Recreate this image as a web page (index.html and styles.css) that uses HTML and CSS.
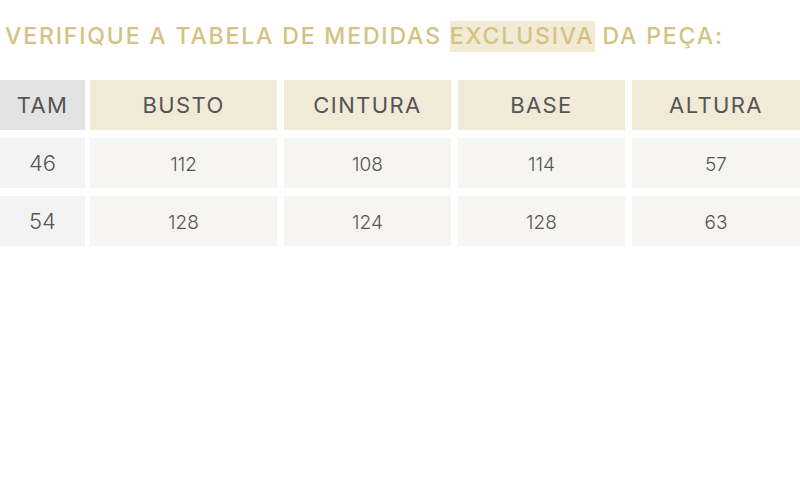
FILE: index.html
```html
<!DOCTYPE html>
<html lang="pt">
<head>
<meta charset="utf-8">
<link rel="stylesheet" href="styles.css">
</head>
<body>
<div class="page">
  <h2 class="title">VERIFIQUE A TABELA DE MEDIDAS <span class="mark">EXCLUSIVA</span> DA PEÇA:</h2>
  <div class="table">
    <div class="cell head tam">TAM</div>
    <div class="cell head">BUSTO</div>
    <div class="cell head">CINTURA</div>
    <div class="cell head">BASE</div>
    <div class="cell head">ALTURA</div>

    <div class="cell size">46</div>
    <div class="cell val">112</div>
    <div class="cell val">108</div>
    <div class="cell val">114</div>
    <div class="cell val">57</div>

    <div class="cell size">54</div>
    <div class="cell val">128</div>
    <div class="cell val">124</div>
    <div class="cell val">128</div>
    <div class="cell val">63</div>
  </div>
</div>
</body>
</html>
```

FILE: styles.css
```css
html, body {
  margin: 0;
  padding: 0;
  background: #ffffff;
}

.page {
  width: 800px;
  overflow: hidden;
  font-family: "Inter", "DejaVu Sans", sans-serif;
}

.title {
  margin: 21px 0 0 0;
  padding-left: 5px;
  font-size: 23px;
  font-weight: 500;
  line-height: 31px;
  color: #d4c283;
  letter-spacing: 1.85px;
  white-space: nowrap;
}

.mark {
  display: inline-block;
  background: #f1ebd5;
  line-height: 31px;
}

.table {
  margin-top: 28px;
  display: grid;
  grid-template-columns: 83px 187px 167px 167px 168px;
  column-gap: 7px;
  row-gap: 8px;
}

.cell {
  height: 50px;
  display: flex;
  align-items: center;
  justify-content: center;
  color: #555555;
}

.tam,
.size {
  margin-right: -2px;
}

.head {
  background: #f0ead6;
  font-size: 22px;
  font-weight: 400;
  letter-spacing: 1.4px;
}

.head.tam {
  background: #e3e3e3;
}

.size {
  background: #f3f3f3;
  font-size: 22px;
  font-weight: 300;
}

.val {
  background: #f6f5f1;
  font-size: 19px;
  font-weight: 300;
  padding-top: 3px;
  box-sizing: border-box;
}
```
